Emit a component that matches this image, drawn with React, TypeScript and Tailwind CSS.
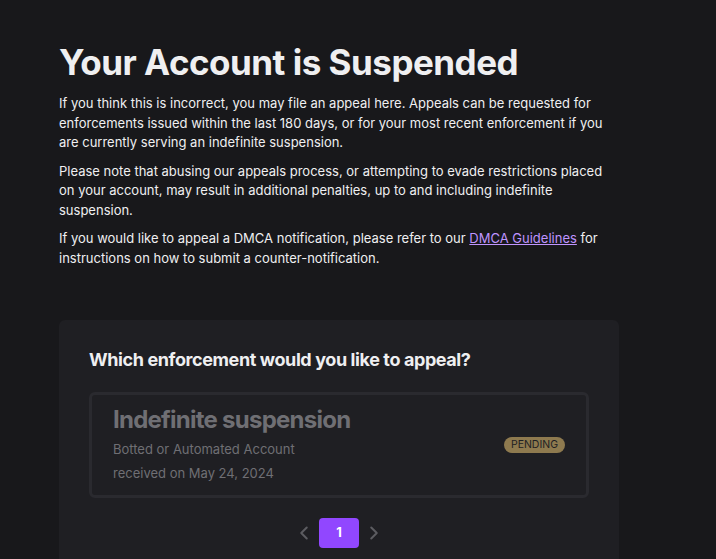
import { ChevronLeft, ChevronRight } from "lucide-react";

const font = { fontFamily: "Inter, 'Noto Sans', sans-serif" };

export default function App() {
  return (
    <div className="min-h-[559px] w-full overflow-hidden bg-[#18181b] text-[#efeff1]" style={font}>
      <div className="w-[560px] pl-[59px] pt-[40px] box-content">
        <h1 className="text-[35px] font-bold leading-[44px] tracking-[-0.5px] text-[#efeff1]">
          Your Account is Suspended
        </h1>
        <div className="mt-[10px] flex flex-col gap-[9px] text-[13px] leading-[19.5px]">
          <p>
            If you think this is incorrect, you may file an appeal here. Appeals can be requested for
            enforcements issued within the last 180 days, or for your most recent enforcement if you
            are currently serving an indefinite suspension.
          </p>
          <p>
            Please note that abusing our appeals process, or attempting to evade restrictions placed
            on your account, may result in additional penalties, up to and including indefinite
            suspension.
          </p>
          <p>
            If you would like to appeal a DMCA notification, please refer to our{" "}
            <a href="#" className="text-[#bf94ff] underline">
              DMCA Guidelines
            </a>{" "}
            for instructions on how to submit a counter-notification.
          </p>
        </div>

        <div className="mt-[52px] rounded-md bg-[#1f1f23] px-[30px] pt-[28px] pb-[30px]">
          <h2 className="text-[18px] font-bold leading-[24px] tracking-[-0.4px] text-[#efeff1]">
            Which enforcement would you like to appeal?
          </h2>
          <div className="mt-[20px] flex items-center justify-between rounded-md border-[3px] border-[#2a2a2f] px-[21px] pt-[9px] pb-[10px]">
            <div className="flex flex-col">
              <span className="text-[24px] font-bold leading-[32px] tracking-[-0.75px] text-[#6f6f74]">
                Indefinite suspension
              </span>
              <span className="mt-[1px] text-[13px] leading-[24px] text-[#6f6f74]">
                Botted or Automated Account
              </span>
              <span className="text-[13px] leading-[24px] text-[#6f6f74]">
                received on May 24, 2024
              </span>
            </div>
            <span className="rounded-full bg-[#8e7a4f] px-[7px] text-[10.5px] leading-[16px] text-[#1f1f23]">
              PENDING
            </span>
          </div>
          <div className="mt-[20px] flex items-center justify-center gap-[4px]">
            <ChevronLeft className="h-[22px] w-[22px] text-[#5c5c61]" strokeWidth={2.2} />
            <button className="h-[30px] w-[40px] rounded bg-[#9147ff] text-[13px] font-bold text-white">
              1
            </button>
            <ChevronRight className="h-[22px] w-[22px] text-[#5c5c61]" strokeWidth={2.2} />
          </div>
        </div>
      </div>
    </div>
  );
}
